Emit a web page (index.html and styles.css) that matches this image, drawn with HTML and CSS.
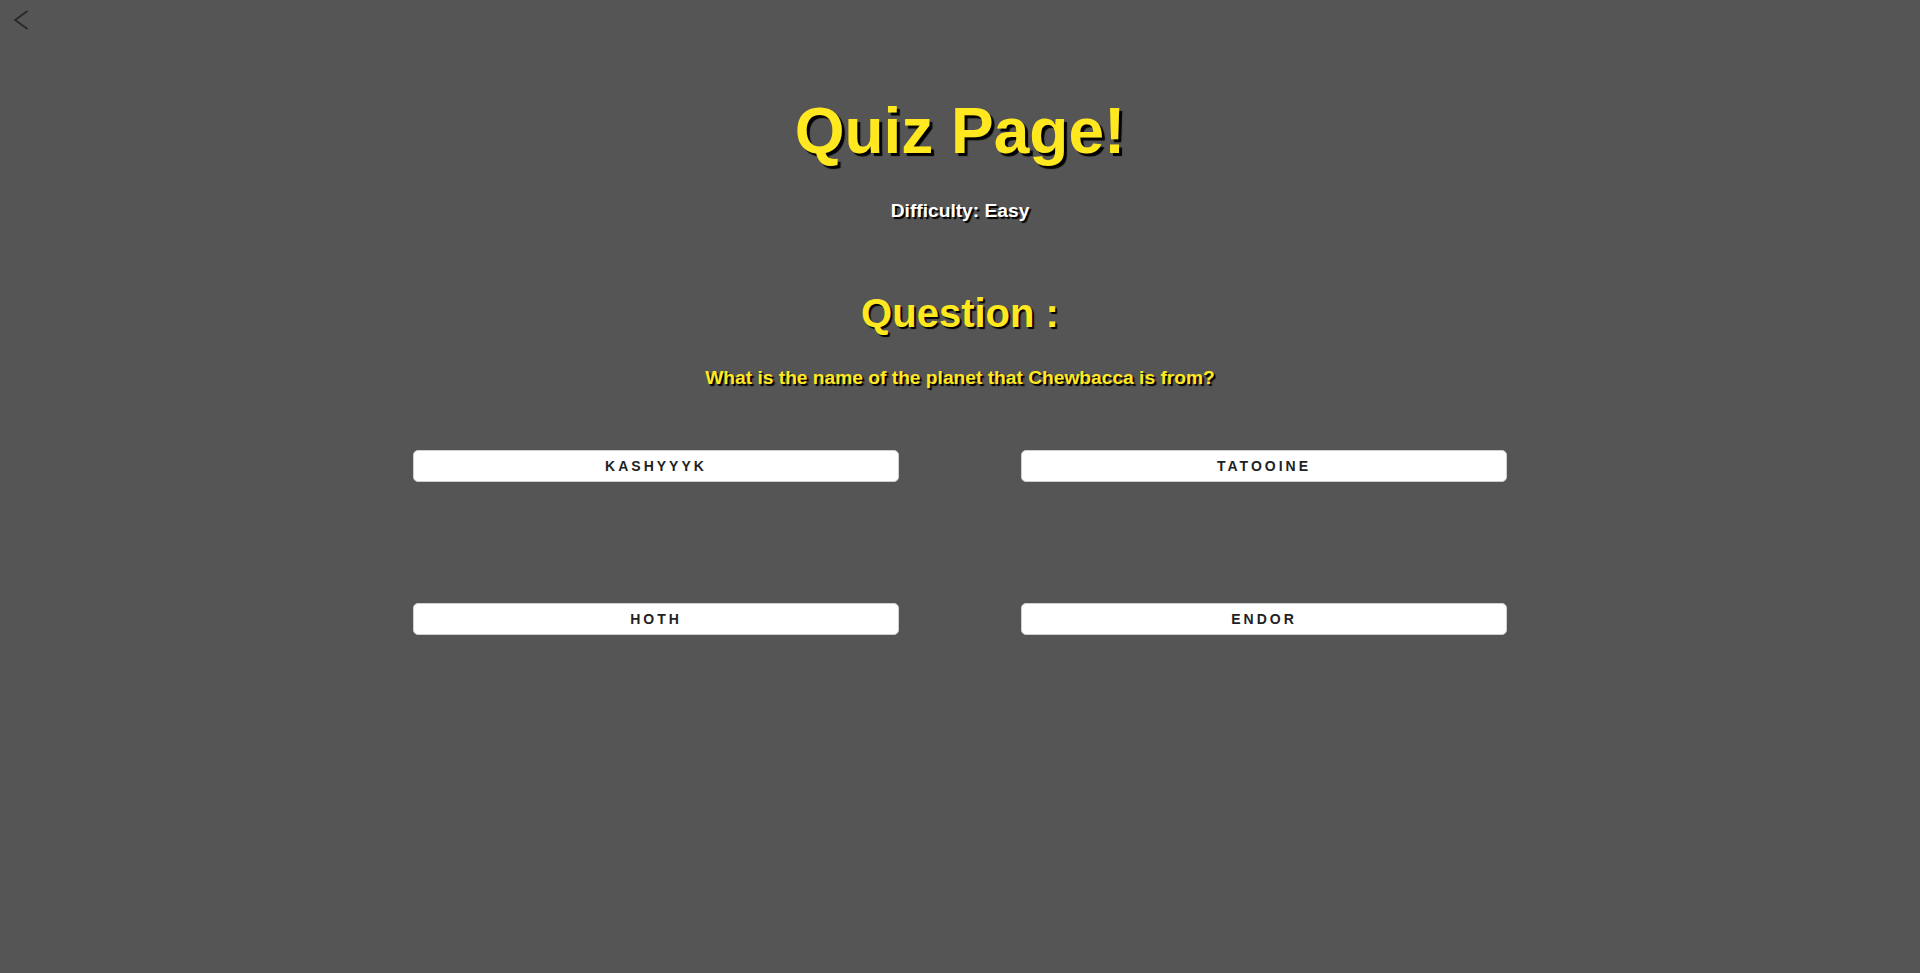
FILE: index.html
```html
<!DOCTYPE html>
<html lang="en">
<head>
<meta charset="utf-8">
<title>Quiz Page</title>
<link rel="stylesheet" href="styles.css">
</head>
<body>
  <header class="topbar">
    <a class="back" href="#" aria-label="Back">
      <svg width="24" height="24" viewBox="0 0 24 24"><path d="M21.5 3 L9 12 L21.5 21" fill="none" stroke="#262626" stroke-width="1.6" stroke-linejoin="miter"/></svg>
    </a>
  </header>
  <main class="quiz">
    <h1 class="title">Quiz Page!</h1>
    <h4 class="difficulty">Difficulty: Easy</h4>
    <h2 class="question-label">Question :</h2>
    <h4 class="question-text">What is the name of the planet that Chewbacca is from?</h4>
    <div class="answers">
      <button class="answer">Kashyyyk</button>
      <button class="answer">Tatooine</button>
      <button class="answer">Hoth</button>
      <button class="answer">Endor</button>
    </div>
  </main>
</body>
</html>
```
FILE: styles.css
```css
html, body {
  margin: 0;
  padding: 0;
}
body {
  background: #555555;
  font-family: "Liberation Sans", Arial, sans-serif;
  min-height: 973px;
}
.topbar {
  height: 40px;
  display: flex;
  align-items: flex-start;
}
.back {
  display: block;
  width: 24px;
  height: 24px;
  margin: 8px 0 0 6px;
}
.back svg {
  display: block;
}
.quiz {
  display: flex;
  flex-direction: column;
  align-items: center;
}
.title {
  margin: 59px 0 0;
  font-size: 64px;
  line-height: 64px;
  font-weight: bold;
  color: #FFE81F;
  text-shadow: 3px 3px 1px #000;
}
.difficulty {
  margin: 38px 0 0;
  font-size: 19.2px;
  line-height: 19.2px;
  font-weight: bold;
  color: #ffffff;
  text-shadow: 2px 2px 1px #000;
}
.question-label {
  margin: 73px 0 0;
  font-size: 40px;
  line-height: 40px;
  font-weight: bold;
  color: #FFE81F;
  text-shadow: 2px 2px 1px #000;
}
.question-text {
  margin: 35px 0 0;
  font-size: 19.2px;
  line-height: 19.2px;
  font-weight: bold;
  color: #FFE81F;
  text-shadow: 2px 2px 1px #000;
}
.answers {
  margin-top: 63px;
  display: grid;
  grid-template-columns: 486px 486px;
  column-gap: 122px;
  row-gap: 121px;
}
.answer {
  height: 32px;
  background: #ffffff;
  border: 1px solid #cfcfcf;
  border-radius: 5px;
  font-family: "Liberation Sans", Arial, sans-serif;
  font-size: 14px;
  font-weight: bold;
  letter-spacing: 3px;
  text-transform: uppercase;
  color: #222222;
  padding: 0;
  cursor: pointer;
}
```
